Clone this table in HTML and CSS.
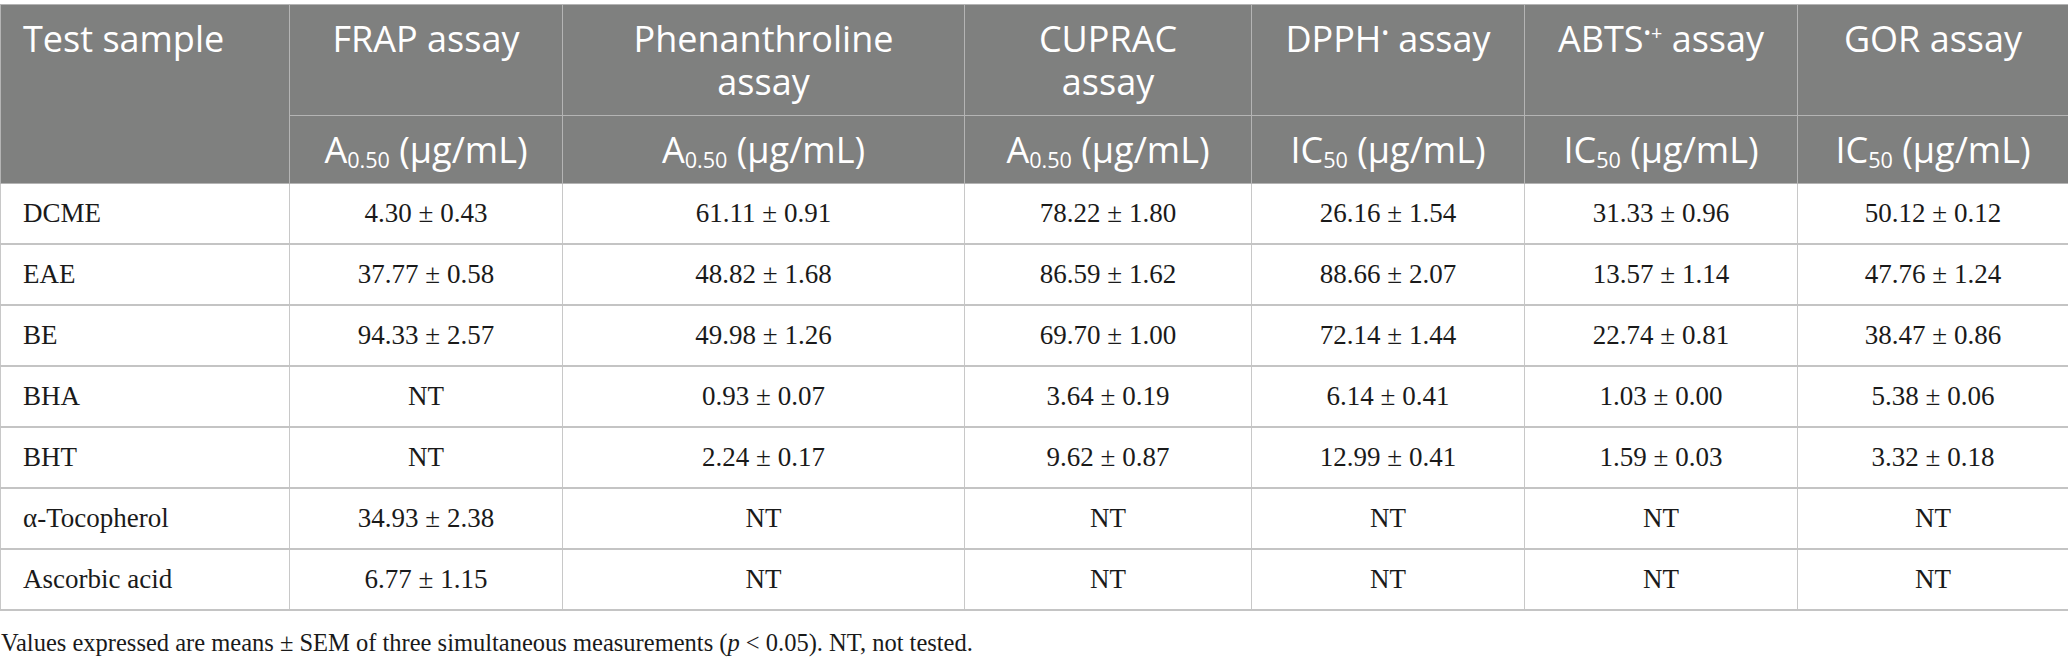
FILE: index.html
```html
<!DOCTYPE html>
<html>
<head>
<meta charset="utf-8">
<link rel="stylesheet" href="styles.css">
</head>
<body>
<table class="data">
  <colgroup>
    <col class="c1"><col class="c2"><col class="c3"><col class="c4"><col class="c5"><col class="c6"><col class="c7">
  </colgroup>
  <thead>
    <tr class="h1">
      <th class="first" rowspan="2">Test sample</th>
      <th>FRAP assay</th>
      <th>Phenanthroline assay</th>
      <th>CUPRAC<br>assay</th>
      <th>DPPH<sup class="rad">•</sup> assay</th>
      <th>ABTS<sup class="rad">•+</sup> assay</th>
      <th>GOR assay</th>
    </tr>
    <tr class="h2">
      <th>A<sub>0.50</sub> (μg/mL)</th>
      <th>A<sub>0.50</sub> (μg/mL)</th>
      <th>A<sub>0.50</sub> (μg/mL)</th>
      <th>IC<sub>50</sub> (μg/mL)</th>
      <th>IC<sub>50</sub> (μg/mL)</th>
      <th>IC<sub>50</sub> (μg/mL)</th>
    </tr>
  </thead>
  <tbody>
    <tr><td>DCME</td><td>4.30 ± 0.43</td><td>61.11 ± 0.91</td><td>78.22 ± 1.80</td><td>26.16 ± 1.54</td><td>31.33 ± 0.96</td><td>50.12 ± 0.12</td></tr>
    <tr><td>EAE</td><td>37.77 ± 0.58</td><td>48.82 ± 1.68</td><td>86.59 ± 1.62</td><td>88.66 ± 2.07</td><td>13.57 ± 1.14</td><td>47.76 ± 1.24</td></tr>
    <tr><td>BE</td><td>94.33 ± 2.57</td><td>49.98 ± 1.26</td><td>69.70 ± 1.00</td><td>72.14 ± 1.44</td><td>22.74 ± 0.81</td><td>38.47 ± 0.86</td></tr>
    <tr><td>BHA</td><td>NT</td><td>0.93 ± 0.07</td><td>3.64 ± 0.19</td><td>6.14 ± 0.41</td><td>1.03 ± 0.00</td><td>5.38 ± 0.06</td></tr>
    <tr><td>BHT</td><td>NT</td><td>2.24 ± 0.17</td><td>9.62 ± 0.87</td><td>12.99 ± 0.41</td><td>1.59 ± 0.03</td><td>3.32 ± 0.18</td></tr>
    <tr><td>α-Tocopherol</td><td>34.93 ± 2.38</td><td>NT</td><td>NT</td><td>NT</td><td>NT</td><td>NT</td></tr>
    <tr><td>Ascorbic acid</td><td>6.77 ± 1.15</td><td>NT</td><td>NT</td><td>NT</td><td>NT</td><td>NT</td></tr>
  </tbody>
</table>
<p class="note">Values expressed are means ± SEM of three simultaneous measurements (<i>p</i> &lt; 0.05). NT, not tested.</p>
</body>
</html>
```

FILE: styles.css
```css
html, body {
  margin: 0;
  padding: 0;
  background: #ffffff;
}
body {
  padding-top: 4px;
}
.data {
  width: 2068px;
  border-collapse: collapse;
  table-layout: fixed;
}
.c1 { width: 289px; }
.c2 { width: 273px; }
.c3 { width: 402px; }
.c4 { width: 287px; }
.c5 { width: 273px; }
.c6 { width: 273px; }
.c7 { width: 271px; }

.data th {
  background: #7f807f;
  color: #ffffff;
  font-family: "Open Sans", "Noto Sans", sans-serif;
  font-weight: 400;
  font-size: 36px;
  line-height: 43px;
  padding: 12px 20px;
  text-align: center;
  vertical-align: top;
  border: 1px solid #b4b4b4;
}
.data th.first {
  text-align: left;
  padding-left: 22px;
}
.data .h1 th { height: 86px; }
.data .h2 th { height: 43px; padding-top: 12px; padding-bottom: 12px; }
.data th sub {
  font-size: 60%;
  vertical-align: -0.25em;
  line-height: 0;
}
.data th sup.rad {
  font-size: 55%;
  vertical-align: 0.6em;
  line-height: 0;
}
.data td {
  font-family: "Liberation Serif", "Times New Roman", serif;
  font-size: 27px;
  color: #1a1a1a;
  height: 59px;
  padding: 0 20px;
  text-align: center;
  vertical-align: middle;
  border-left: 1px solid #c8c8c8;
  border-right: 1px solid #c8c8c8;
  border-bottom: 2px solid #c4c4c4;
}
.data td:first-child {
  text-align: left;
  padding-left: 22px;
}
.note {
  margin: 18px 0 0 1px;
  font-family: "Liberation Serif", "Times New Roman", serif;
  font-size: 24.5px;
  color: #1a1a1a;
}
```
